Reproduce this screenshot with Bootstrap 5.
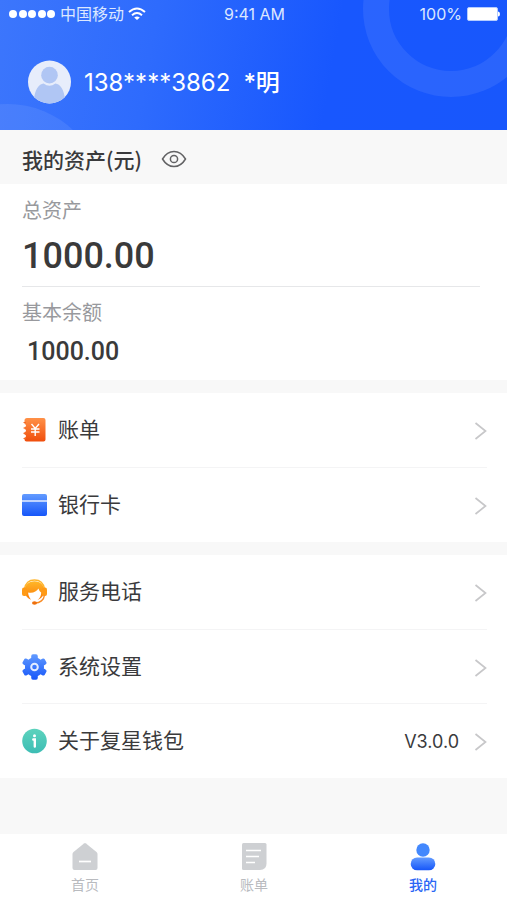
<!DOCTYPE html>
<html lang="zh-CN">
<head>
<meta charset="utf-8">
<meta name="viewport" content="width=device-width, initial-scale=1">
<title>我的</title>
<link href="https://cdn.jsdelivr.net/npm/bootstrap@5.3.0/dist/css/bootstrap.min.css" rel="stylesheet">
<style>
  body { font-family: "Liberation Sans", "Noto Sans CJK SC", sans-serif; background: #f8f8f8; color: #3a3a3c; }
  .hero { background: linear-gradient(100deg, #3c76fc 0%, #2e6bfd 30%, #1857fe 65%, #1857fc 100%); height: 130px; }
  .hero-art { inset: 0; width: 100%; height: 100%; }
  .status { font-family: Inter, "Noto Sans CJK SC", sans-serif; font-size: 16px; line-height: 28px; color: #dce7ff; padding: 0 7px 0 9px; }
  .status .side { flex: 1 1 0; }
  .user { padding: 31px 28px 0; gap: 13px; font: 400 24px/44px Inter, "Noto Sans CJK SC", sans-serif; }
  .user span { padding-top: 2px; }
  .user .given { font-weight: 500; }
  .section-title { height: 54px; padding: 3px 22px 0; gap: 19px; }
  .section-title h1 { font: 500 21px/30px "Noto Sans CJK SC", sans-serif; }
  .assets { padding: 12px 27px 4px 22px; }
  .assets dt { font-size: 20px; line-height: 30px; font-weight: 400; color: #98999d; }
  .assets dd { font-family: Roboto, sans-serif; font-weight: 500; color: #3a3a3a; }
  .total { font-size: 36px; line-height: 60px; border-bottom: 1px solid #e6e7e9; margin: 0 0 11px; }
  .basic { font-size: 25px; line-height: 48px; padding-left: 5px; }
  .menu { padding: 0 20px 0 22px; margin-top: 13px; }
  .menu a { height: 74px; color: #3a3a3c; font-size: 21px; gap: 11px; }
  .menu li + li a { border-top: 1px solid #f4f4f5; }
  .menu li:last-child a { height: 75px; }
  .ver { font-family: Inter, sans-serif; font-size: 18px; }
  .icon { width: 25px; height: 26px; flex: none; }
  .arrow { width: 13px; height: 18px; flex: none; margin: 2px 0 0 4px; }
  .tabs { height: 66px; margin-top: 56px; font-size: 14px; line-height: 20px; }
  .tabs a { color: #b9bbbf; padding: 8px 0 0 1px; gap: 4px; }
  .tabs a.active { color: #2a66f5; font-weight: 500; }
</style>
</head>
<body>
<header class="hero position-relative text-white overflow-hidden">
  <svg class="hero-art position-absolute" viewBox="0 0 507 130" preserveAspectRatio="xMidYMin slice" aria-hidden="true">
    <circle cx="451" cy="9" r="75" fill="none" stroke="#fff" stroke-opacity=".08" stroke-width="26"/>
    <circle cx="8" cy="198" r="94" fill="#fff" fill-opacity=".08"/>
  </svg>
  <div class="status d-flex align-items-center position-relative">
    <div class="side d-flex align-items-center">
      <svg class="me-1" width="47" height="10" fill="#fff" aria-hidden="true"><circle cx="4" cy="5" r="4"/><circle cx="14" cy="5" r="4"/><circle cx="23" cy="5" r="4"/><circle cx="33" cy="5" r="4"/><circle cx="42" cy="5" r="4"/></svg>
      <span>中国移动</span>
      <svg class="ms-1" width="18" height="14" viewBox="0 0 18 14" fill="none" stroke="#fff" stroke-width="2" aria-hidden="true"><path d="M1 5Q9-2 17 5M4 8.200Q9 3.800 14 8.200"/><path d="M9 13 6.200 10.400Q9 8.400 11.800 10.400Z" fill="#fff" stroke="none"/></svg>
    </div>
    <span>9:41 AM</span>
    <div class="side d-flex align-items-center justify-content-end gap-1">
      <span>100%</span>
      <svg width="34" height="14" viewBox="0 0 34 14" aria-hidden="true"><rect x="1.500" y=".5" width="30" height="13" rx="1.500" fill="#fff" stroke="#b4ccff"/><path d="M32 4.500q2 0 2 2.500t-2 2.500z" fill="#fff"/></svg>
    </div>
  </div>
  <div class="user d-flex align-items-center position-relative">
    <svg width="43" height="44" viewBox="0 0 44 44" aria-hidden="true">
      <defs><clipPath id="face"><circle cx="22" cy="22" r="22"/></clipPath></defs>
      <circle cx="22" cy="22" r="22" fill="#e7edfb"/>
      <path clip-path="url(#face)" d="M6 40C7 30 11 24 16 23.500Q22 28 28 23.500C33 24 37 30 38 40L30 46H14Z" fill="#b0c6f4"/>
      <circle cx="22" cy="15" r="8.500" fill="#b0c6f4"/>
    </svg>
    <span>138****3862</span><span class="given">*明</span>
  </div>
</header>

<main>
  <div class="section-title d-flex align-items-center">
    <h1 class="m-0">我的资产(元)</h1>
    <button type="button" class="btn p-0 border-0 d-flex" aria-label="显示或隐藏金额">
      <svg width="26" height="18" viewBox="0 0 26 18" fill="none" stroke="#626264" stroke-width="1.500"><path d="M1.500 9C4.500 4 8.500 1.500 13 1.500S21.500 4 24.500 9C21.500 14 17.500 16.500 13 16.500S4.500 14 1.500 9Z"/><circle cx="13" cy="9" r="3.600"/></svg>
    </button>
  </div>
  <dl class="assets bg-white m-0">
    <dt>总资产</dt>
    <dd class="total">1000.00</dd>
    <dt>基本余额</dt>
    <dd class="basic m-0">1000.00</dd>
  </dl>

  <ul class="menu list-unstyled bg-white mb-0">
    <li><a href="#bills" class="d-flex align-items-center text-decoration-none">
      <svg class="icon" viewBox="0 0 25 26" aria-hidden="true">
        <defs><linearGradient id="og" x2="0" y2="1"><stop stop-color="#ff9148"/><stop offset="1" stop-color="#f04e0c"/></linearGradient></defs>
        <path d="M5 1H21.500Q23.500 1 23.500 3V22.500Q23.500 24.500 21.500 24.500H4.500Q2.500 24.500 2.500 22.500V20.500A1.500 1.500 0 0 0 2.500 17.500V15A1.500 1.500 0 0 0 2.500 12V10A1.500 1.500 0 0 0 2.500 7V3.500Q2.500 1 5 1Z" fill="url(#og)"/>
        <path d="M1.500 5.500H4M1.500 11H4M1.500 16.300H4M1.500 21.500H4" stroke="#f26a26" stroke-width="1.200"/>
        <path d="M9.500 7 13.200 11.500 17 7M9 12H17.500M9 15H17.500M13.200 11.500V19" fill="none" stroke="#fff" stroke-width="1.400"/>
      </svg>
      <span class="flex-grow-1">账单</span>
      <svg class="arrow" viewBox="0 0 13 18" fill="none" stroke="#c7c7c9" stroke-width="1.700" aria-hidden="true"><path d="M1.500 1 11.500 9 1.500 17"/></svg>
    </a></li>
    <li><a href="#cards" class="d-flex align-items-center text-decoration-none">
      <svg class="icon" viewBox="0 0 25 26" aria-hidden="true">
        <defs><linearGradient id="bg" x2="0" y2="1"><stop stop-color="#629bff"/><stop offset="1" stop-color="#1656f9"/></linearGradient></defs>
        <rect y="2" width="25" height="22" rx="2" fill="url(#bg)"/><path d="M0 9H25" stroke="#fff" stroke-width="1.300"/>
      </svg>
      <span class="flex-grow-1">银行卡</span>
      <svg class="arrow" viewBox="0 0 13 18" fill="none" stroke="#c7c7c9" stroke-width="1.700" aria-hidden="true"><path d="M1.500 1 11.500 9 1.500 17"/></svg>
    </a></li>
  </ul>

  <ul class="menu list-unstyled bg-white mb-0">
    <li><a href="#service" class="d-flex align-items-center text-decoration-none">
      <svg class="icon" viewBox="0 0 25 26" aria-hidden="true">
        <defs><linearGradient id="yg" x2="0" y2="1"><stop stop-color="#ffb728"/><stop offset="1" stop-color="#fb7b08"/></linearGradient></defs>
        <path d="M2.500 10C3.500 4 7.500 .9 12.500 .9S21.500 4 22.500 10" fill="none" stroke="#ffb52c" stroke-width="1.500"/>
        <path d="M12.500 2.300C6.500 2.300 2.800 6.500 2.800 11.500C2.800 16 5 19 9 20.800C7 18 6 15.500 6.200 13.500C11 14.500 14.500 12.500 16.500 9.500C17 11.500 18 12.800 19.200 13.500C19.200 16.500 18 19 15.500 21C19.800 19.500 22.200 16 22.200 11.500C22.200 6.500 18.500 2.300 12.500 2.300Z" fill="url(#yg)"/>
        <rect y="8.500" width="5" height="8.500" rx="2" fill="#ff9a15"/><rect x="20" y="8.500" width="5" height="8.500" rx="2" fill="#ff9a15"/>
        <path d="M22.500 16C22 21 18 24 13 24" fill="none" stroke="#f98b24" stroke-width="1.400"/><ellipse cx="12.500" cy="24" rx="2.500" ry="1.700" fill="#ee700d"/>
      </svg>
      <span class="flex-grow-1">服务电话</span>
      <svg class="arrow" viewBox="0 0 13 18" fill="none" stroke="#c7c7c9" stroke-width="1.700" aria-hidden="true"><path d="M1.500 1 11.500 9 1.500 17"/></svg>
    </a></li>
    <li><a href="#settings" class="d-flex align-items-center text-decoration-none">
      <svg class="icon" viewBox="0 0 25 26" aria-hidden="true">
        <defs><clipPath id="gear"><circle cx="12.500" cy="13" r="9.500"/><path id="teeth" d="M9.200 6V2.200Q9.200 .3 11 .3H14Q15.800 .3 15.800 2.200V6Z"/><use href="#teeth" transform="rotate(60 12.500 13)"/><use href="#teeth" transform="rotate(120 12.500 13)"/><use href="#teeth" transform="rotate(180 12.500 13)"/><use href="#teeth" transform="rotate(240 12.500 13)"/><use href="#teeth" transform="rotate(300 12.500 13)"/></clipPath></defs>
        <rect width="25" height="26" fill="url(#bg)" clip-path="url(#gear)"/>
        <circle cx="12.500" cy="13" r="3.300" fill="none" stroke="#e3edff" stroke-width="2"/>
      </svg>
      <span class="flex-grow-1">系统设置</span>
      <svg class="arrow" viewBox="0 0 13 18" fill="none" stroke="#c7c7c9" stroke-width="1.700" aria-hidden="true"><path d="M1.500 1 11.500 9 1.500 17"/></svg>
    </a></li>
    <li><a href="#about" class="d-flex align-items-center text-decoration-none">
      <svg class="icon" viewBox="0 0 25 26" aria-hidden="true">
        <defs><linearGradient id="gg" x2="0" y2="1"><stop stop-color="#5dd3bd"/><stop offset="1" stop-color="#3dbdb4"/></linearGradient></defs>
        <circle cx="12.500" cy="13" r="12.300" fill="url(#gg)"/><circle cx="12.500" cy="7.800" r="1.500" fill="#fff"/><path d="M11.300 11.500H12.800V18.500" fill="none" stroke="#fff" stroke-width="2.400" stroke-linecap="round"/>
      </svg>
      <span class="flex-grow-1">关于复星钱包</span>
      <span class="ver">V3.0.0</span>
      <svg class="arrow" viewBox="0 0 13 18" fill="none" stroke="#c7c7c9" stroke-width="1.700" aria-hidden="true"><path d="M1.500 1 11.500 9 1.500 17"/></svg>
    </a></li>
  </ul>
</main>

<nav class="tabs row g-0 bg-white text-center" aria-label="主导航">
  <a href="#home" class="col d-flex flex-column align-items-center text-decoration-none">
    <svg width="26" height="29" viewBox="0 0 26 29" aria-hidden="true"><path d="M12 1.500Q13 .7 14 1.500L24.500 10Q25.500 11 25.500 12V26Q25.500 28 23.500 28H2.500Q.5 28 .5 26V12Q.5 11 1.500 10Z" fill="#ced0d3"/><path d="M7 19.500H19" stroke="#fff" stroke-width="1.700"/></svg>
    <span>首页</span>
  </a>
  <a href="#bills" class="col d-flex flex-column align-items-center text-decoration-none">
    <svg width="26" height="29" viewBox="0 0 26 29" aria-hidden="true"><path d="M2.500 1H24Q25.500 1 25.500 2.500V21.500Q25.500 28 19 28H2.500Q1 28 1 26.500V2.500Q1 1 2.500 1Z" fill="#ced0d3"/><path d="M5 8.500H20M5 14.500H18M5 20.500H14" stroke="#fff" stroke-width="1.700"/></svg>
    <span>账单</span>
  </a>
  <a href="#me" class="active col d-flex flex-column align-items-center text-decoration-none" aria-current="page">
    <svg width="26" height="29" viewBox="0 0 26 29" aria-hidden="true"><circle cx="13" cy="8" r="6.700" fill="#4388fd"/><rect x=".7" y="15.500" width="24.600" height="12.800" rx="6.400" fill="url(#bg)"/></svg>
    <span>我的</span>
  </a>
</nav>
<script src="https://cdn.jsdelivr.net/npm/bootstrap@5.3.0/dist/js/bootstrap.bundle.min.js"></script>
</body>
</html>
